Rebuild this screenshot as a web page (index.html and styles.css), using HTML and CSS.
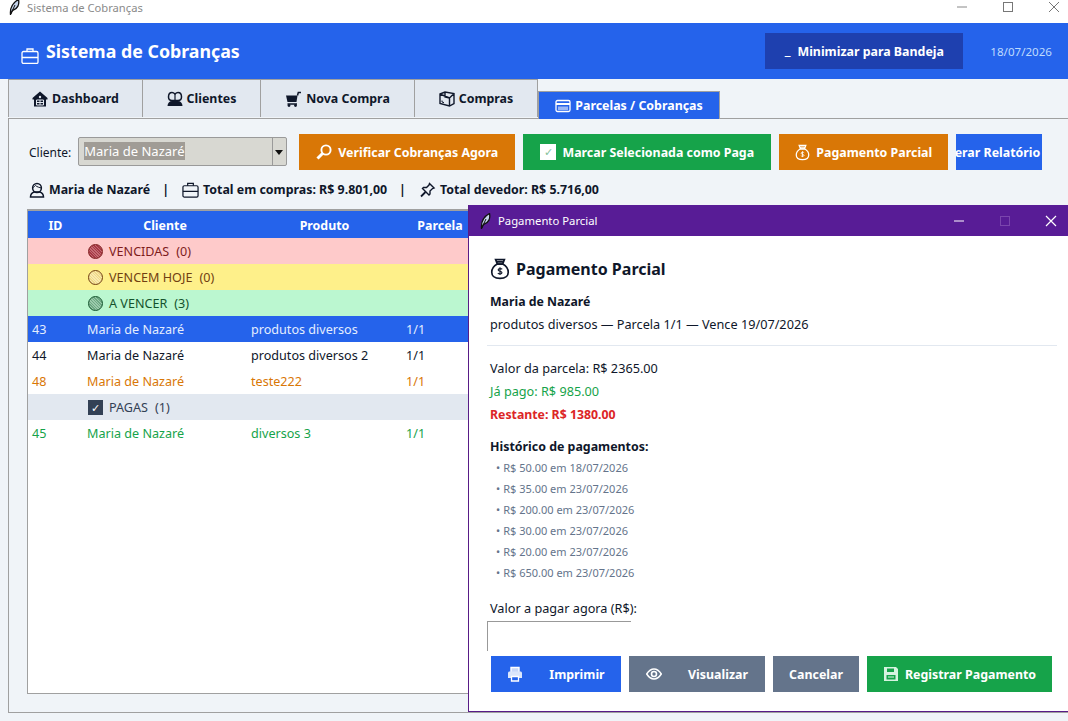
FILE: index.html
```html
<!DOCTYPE html>
<html lang="pt-BR">

<head>
    <meta charset="UTF-8">
    <title>Sistema de Cobranças</title>
    <link rel="stylesheet" href="styles.css">
</head>

<body>
    <svg class="defs" width="0" height="0">
        <symbol id="i-feather" viewBox="0 0 12 16">
            <path d="M2.500 15.500 C2 10 4 4 10.500 .5 C11.500 5 10 10 4.500 11.500 L2.500 15.500Z" fill="#c4d2ea" stroke="#111" stroke-width="1.300"/>
            <path d="M2.500 15.500 L7 6" stroke="#111" stroke-width="1"/>
        </symbol>
        <symbol id="i-case" viewBox="0 0 18 16">
            <rect x="1" y="3.500" width="16" height="12" rx="1.500" fill="none" stroke="currentColor" stroke-width="1.300"/>
            <path d="M1 9.500h16M6 3.500V1h6v2.500" fill="none" stroke="currentColor" stroke-width="1.300"/>
        </symbol>
        <symbol id="i-home" viewBox="0 0 16 16">
            <path d="M8 .5 L15.500 7 V8.500 H14 V15.500 H2 V8.500 H.5 V7Z" fill="currentColor"/>
            <path d="M4.500 9h7v5h-7zM8 9v5M4.500 11.500h7" fill="none" stroke="#e2e8f0" stroke-width="1"/>
            <circle cx="8" cy="6" r="1.200" fill="#e2e8f0"/>
        </symbol>
        <symbol id="i-users" viewBox="0 0 16 16">
            <path d="M1.500 6C1.500 3 3 1.500 5 1.500 6.500 1.500 7.500 2.500 8 3 8.500 2.500 9.500 1.500 11 1.500 13 1.500 14.500 3 14.500 6 14.500 8.500 13 9.500 11 9.500H5C3 9.500 1.500 8.500 1.500 6z" fill="none" stroke="currentColor" stroke-width="1.500"/>
            <path d="M8 3v6" stroke="currentColor" stroke-width="1.200"/>
            <path d="M.5 15c0-3 2-5 4.500-5h6c2.500 0 4.500 2 4.500 5z" fill="currentColor"/>
        </symbol>
        <symbol id="i-cart" viewBox="0 0 16 16">
            <path d="M.5 4.500h11.500l-1 6.500H2z" fill="currentColor"/>
            <path d="M12 4.500l.8-3h2.700M2 13h9.500" fill="none" stroke="currentColor" stroke-width="1.500"/>
            <circle cx="3.500" cy="14.500" r="1.400" fill="currentColor"/>
            <circle cx="10" cy="14.500" r="1.400" fill="currentColor"/>
        </symbol>
        <symbol id="i-box" viewBox="0 0 16 16">
            <path d="M1 3 L6 1 L15 2.500 V12.500 L10.500 15 L1 12.500Z M6 1 V6 L10.500 7 V15 M10.500 7 L15 2.500 M1 3 L10.500 7" fill="none" stroke="currentColor" stroke-width="1.400"/>
            <path d="M3 9.500v1.500l2 .6" fill="none" stroke="currentColor" stroke-width="1"/>
        </symbol>
        <symbol id="i-card" viewBox="0 0 16 14">
            <rect x="1" y="1.500" width="14" height="11" rx="1.500" fill="none" stroke="currentColor" stroke-width="1.300"/>
            <rect x="1" y="4" width="14" height="2" fill="currentColor"/>
            <rect x="3" y="7.500" width="10" height="3.500" fill="currentColor" opacity="0.550"/>
        </symbol>
        <symbol id="i-search" viewBox="0 0 16 16">
            <circle cx="10" cy="6" r="4.600" fill="none" stroke="currentColor" stroke-width="1.900"/>
            <path d="M6.500 9.500 L1.500 14.500" stroke="currentColor" stroke-width="3"/>
        </symbol>
        <symbol id="i-bag" viewBox="0 0 18 20">
            <path d="M5 1.500h8l-1.600 4H6.600zM6.500 3.500h5" fill="none" stroke="currentColor" stroke-width="1.500"/>
            <path d="M6.500 5.500C3 7.500 1.500 10 1.500 13c0 3.500 3 5.500 7.500 5.500s7.500-2 7.500-5.500c0-3-1.500-5.500-5-7.500z" fill="none" stroke="currentColor" stroke-width="1.500"/>
            <path d="M11 10.300C10.500 9.500 7.500 9.300 7.300 10.800c-.2 1.600 3.500 1 3.500 2.700 0 1.500-3 1.300-3.800.3M9 8.500v7" fill="none" stroke="currentColor" stroke-width="1"/>
        </symbol>
        <symbol id="i-user" viewBox="0 0 16 16">
            <circle cx="8" cy="6" r="4.400" fill="none" stroke="currentColor" stroke-width="1.500"/>
            <path d="M3.500 6C5 5 6 4 6.500 3.500 8 5 10.500 5.500 12.500 6" fill="none" stroke="currentColor" stroke-width="1"/>
            <path d="M1.500 15c0-3 2-4.500 4-5h5c2 .5 4 2 4 5z" fill="none" stroke="currentColor" stroke-width="1.500"/>
        </symbol>
        <symbol id="i-pin" viewBox="0 0 16 16">
            <path d="M10 1.500 L14.500 6 L13 6.500 L10.500 9 L10.500 12 L9.500 13 L3 6.500 L4 5.500 L7 5.500 L9.500 3Z" fill="none" stroke="currentColor" stroke-width="1.400"/>
            <path d="M6 10 L1.500 14.500" stroke="currentColor" stroke-width="1.800"/>
        </symbol>
        <symbol id="i-print" viewBox="0 0 16 16">
            <path d="M4 6V1.500h8V6" fill="#c9d8f8" stroke="currentColor" stroke-width="1.400"/>
            <path d="M2.500 5.500h11c.8 0 1.500.7 1.500 1.500v5h-3v-2H4v2H1V7c0-.8.7-1.500 1.500-1.500z" fill="#dbe6fb"/>
            <path d="M4.500 10.500h7v4.500h-7z" fill="none" stroke="currentColor" stroke-width="1.300"/>
        </symbol>
        <symbol id="i-eye" viewBox="0 0 16 12">
            <path d="M.7 6C3 2.500 5.500 1 8 1s5 1.500 7.300 5C13 9.500 10.500 11 8 11S3 9.500.7 6z" fill="none" stroke="currentColor" stroke-width="1.500"/>
            <circle cx="8" cy="6" r="2.500" fill="none" stroke="currentColor" stroke-width="1.600"/>
        </symbol>
        <symbol id="i-save" viewBox="0 0 16 16">
            <path d="M1 1h12l2 2v12H1z" fill="#d6f3e0"/>
            <rect x="4" y="2.500" width="7" height="3.500" fill="#16a34a"/>
            <rect x="3.500" y="9" width="9" height="4.500" fill="#16a34a"/>
            <path d="M5 11h6" stroke="#d6f3e0" stroke-width="1"/>
        </symbol>
    </svg>

    <div class="titlebar">
        <svg class="title-icon"><use href="#i-feather"/></svg>
        <span class="title-text">Sistema de Cobranças</span>
        <div class="win-buttons">
            <svg class="win-btn" viewBox="0 0 12 12"><path d="M1 6h10" stroke="#888"/></svg>
            <svg class="win-btn" viewBox="0 0 12 12"><rect x="1.500" y="1.500" width="9" height="9" fill="none" stroke="#777"/></svg>
            <svg class="win-btn" viewBox="0 0 12 12"><path d="M1 1l10 10M11 1L1 11" stroke="#777"/></svg>
        </div>
    </div>

    <header class="header">
        <h1 class="app-title"><svg class="app-icon"><use href="#i-case"/></svg>Sistema de Cobranças</h1>
        <button class="tray-btn"><span class="tray-mark">_</span>Minimizar para Bandeja</button>
        <span class="today">18/07/2026</span>
    </header>

    <div class="tabs">
        <div class="tab tab-1"><svg class="ico"><use href="#i-home"/></svg>Dashboard</div>
        <div class="tab tab-2"><svg class="ico"><use href="#i-users"/></svg>Clientes</div>
        <div class="tab tab-3"><svg class="ico ico-wide"><use href="#i-cart"/></svg>Nova Compra</div>
        <div class="tab tab-4"><svg class="ico"><use href="#i-box"/></svg>Compras</div>
        <div class="tab tab-active"><svg class="ico"><use href="#i-card"/></svg>Parcelas / Cobranças</div>
    </div>

    <main class="panel">
        <div class="toolbar">
            <label class="combo-label">Cliente:</label>
            <div class="combo">
                <span class="combo-value"><span class="combo-selected">Maria de Nazaré</span></span>
                <span class="combo-arrow"></span>
            </div>
            <button class="btn btn-orange btn-verify"><svg class="ico"><use href="#i-search"/></svg>Verificar Cobranças Agora</button>
            <button class="btn btn-green btn-mark"><span class="check-box">✓</span>Marcar Selecionada como Paga</button>
            <button class="btn btn-orange btn-partial"><svg class="ico ico-bag"><use href="#i-bag"/></svg>Pagamento Parcial</button>
            <button class="btn btn-blue btn-report"><span>Gerar Relatório</span></button>
        </div>

        <div class="summary">
            <svg class="ico"><use href="#i-user"/></svg>
            <span>Maria de Nazaré</span>
            <span class="sep">|</span>
            <svg class="ico ico-wide"><use href="#i-case"/></svg>
            <span>Total em compras: R$ 9.801,00</span>
            <span class="sep">|</span>
            <svg class="ico ico-wide"><use href="#i-pin"/></svg>
            <span>Total devedor: R$ 5.716,00</span>
        </div>

        <div class="table">
            <div class="row row-head">
                <div class="col-id">ID</div>
                <div class="col-client">Cliente</div>
                <div class="col-product">Produto</div>
                <div class="col-part">Parcela</div>
            </div>
            <div class="row group group-late"><span class="dot dot-red"></span>VENCIDAS<span class="count">(0)</span></div>
            <div class="row group group-today"><span class="dot dot-yellow"></span>VENCEM HOJE<span class="count">(0)</span></div>
            <div class="row group group-next"><span class="dot dot-green"></span>A VENCER<span class="count">(3)</span></div>
            <div class="row row-selected">
                <div class="col-id">43</div>
                <div class="col-client">Maria de Nazaré</div>
                <div class="col-product">produtos diversos</div>
                <div class="col-part">1/1</div>
            </div>
            <div class="row">
                <div class="col-id">44</div>
                <div class="col-client">Maria de Nazaré</div>
                <div class="col-product">produtos diversos 2</div>
                <div class="col-part">1/1</div>
            </div>
            <div class="row row-partial">
                <div class="col-id">48</div>
                <div class="col-client">Maria de Nazaré</div>
                <div class="col-product">teste222</div>
                <div class="col-part">1/1</div>
            </div>
            <div class="row group group-paid"><span class="paid-box">✓</span>PAGAS<span class="count">(1)</span></div>
            <div class="row row-paid">
                <div class="col-id">45</div>
                <div class="col-client">Maria de Nazaré</div>
                <div class="col-product">diversos 3</div>
                <div class="col-part">1/1</div>
            </div>
        </div>
    </main>

    <section class="dialog">
        <div class="dialog-bar">
            <svg class="title-icon"><use href="#i-feather"/></svg>
            <span class="dialog-title">Pagamento Parcial</span>
            <div class="dialog-buttons">
                <svg class="win-btn" viewBox="0 0 12 12"><path d="M1 6h10" stroke="#fff"/></svg>
                <svg class="win-btn" viewBox="0 0 12 12"><rect x="1.500" y="1.500" width="9" height="9" fill="none" stroke="#7a45ad"/></svg>
                <svg class="win-btn" viewBox="0 0 12 12"><path d="M1 1l10 10M11 1L1 11" stroke="#fff" stroke-width="1.200"/></svg>
            </div>
        </div>
        <div class="dialog-body">
            <h2 class="dialog-heading"><svg class="heading-icon"><use href="#i-bag"/></svg>Pagamento Parcial</h2>
            <p class="line line-name">Maria de Nazaré</p>
            <p class="line">produtos diversos — Parcela 1/1 — Vence 19/07/2026</p>
            <hr class="rule">
            <p class="line">Valor da parcela: R$ 2365.00</p>
            <p class="line line-paid">Já pago: R$ 985.00</p>
            <p class="line line-left">Restante: R$ 1380.00</p>
            <p class="line line-name history-title">Histórico de pagamentos:</p>
            <ul class="history">
                <li>R$ 50.00 em 18/07/2026</li>
                <li>R$ 35.00 em 23/07/2026</li>
                <li>R$ 200.00 em 23/07/2026</li>
                <li>R$ 30.00 em 23/07/2026</li>
                <li>R$ 20.00 em 23/07/2026</li>
                <li>R$ 650.00 em 23/07/2026</li>
            </ul>
            <p class="line amount-label">Valor a pagar agora (R$):</p>
            <div class="amount-input"></div>
        </div>
        <div class="dialog-footer">
            <button class="btn btn-blue foot-print"><svg class="ico"><use href="#i-print"/></svg>Imprimir</button>
            <button class="btn btn-slate foot-view"><svg class="ico"><use href="#i-eye"/></svg>Visualizar</button>
            <button class="btn btn-slate foot-cancel">Cancelar</button>
            <button class="btn btn-green foot-save"><svg class="ico"><use href="#i-save"/></svg>Registrar Pagamento</button>
        </div>
    </section>
</body>

</html>
```

FILE: styles.css
```css
* {
    box-sizing: border-box;
}

html,
body {
    height: 721px;
    overflow: hidden;
}

body {
    margin: 0;
    background: #f0f4f8;
    color: #0f172a;
    font-family: "Noto Sans", "Open Sans", sans-serif;
    font-size: 12px;
    position: relative;
}

.defs {
    position: absolute;
}

button {
    font-family: inherit;
    border: none;
    padding: 0;
}

/* window title bar */
.titlebar {
    height: 23px;
    background: #fff;
    display: flex;
    align-items: flex-start;
    padding-left: 8px;
    overflow: hidden;
}

.titlebar .title-icon {
    margin-top: -1px;
}

.title-icon {
    width: 12px;
    height: 16px;
    flex: none;
}

.title-text {
    color: #8a8a8a;
    font-size: 11.200px;
    line-height: 15px;
    margin-left: 7px;
}

.win-buttons {
    margin-left: auto;
    display: flex;
    gap: 34px;
    padding: 1px 8px 0 0;
}

.win-btn {
    width: 12px;
    height: 12px;
}

/* blue header */
.header {
    height: 56px;
    background: #2563eb;
    color: #fff;
    display: flex;
    align-items: center;
    padding: 0 16px 0 21px;
}

.app-title {
    margin: 0;
    font-size: 17.800px;
    font-weight: 700;
    display: flex;
    align-items: center;
}

.app-icon {
    width: 18px;
    height: 16px;
    margin: 9px 7px 0 0;
}

.tray-btn {
    margin-left: auto;
    width: 198px;
    height: 36px;
    background: #1e40af;
    color: #fff;
    font-size: 12.400px;
    font-weight: 700;
    display: flex;
    align-items: center;
    justify-content: center;
}

.tray-mark {
    font-size: 14px;
    line-height: 14px;
    margin: -2px 7px 0 0;
}

.today {
    margin-left: 27px;
    color: #bfdbfe;
    font-size: 11.600px;
}

/* tabs */
.tabs {
    height: 39px;
    display: flex;
    align-items: flex-end;
    padding-left: 8px;
}

.tab {
    height: 38px;
    margin-bottom: 1px;
    background: #e2e8f0;
    border: 1px solid #a0a0a0;
    border-bottom: none;
    font-size: 12.400px;
    font-weight: 700;
    display: flex;
    align-items: center;
    justify-content: center;
    gap: 4px;
}

.tab-1 {
    width: 135px;
}

.tab-2 {
    width: 119px;
    margin-left: -1px;
}

.tab-3 {
    width: 155px;
    margin-left: -1px;
}

.tab-4 {
    width: 124px;
    margin-left: -1px;
}

.tab-active {
    width: 182px;
    height: 28px;
    margin-bottom: -1px;
    background: #2563eb;
    color: #fff;
    position: relative;
}

.ico {
    width: 16px;
    height: 16px;
    flex: none;
}

.ico-wide {
    width: 17px;
}

/* main panel */
.panel {
    margin-left: 8px;
    height: 595px;
    width: 1100px;
    border: 1px solid #a0a0a0;
    padding: 15px 0 0 18px;
}

.toolbar {
    height: 36px;
    display: flex;
    align-items: center;
}

.combo-label {
    margin: 0 7px 0 2px;
}

.combo {
    width: 209px;
    height: 29px;
    margin: -2px 12px 0 0;
    background: #d8d8d2;
    border: 1px solid #9a9a9a;
    border-radius: 2px;
    display: flex;
}

.combo-value {
    flex: 1;
    display: flex;
    align-items: center;
    padding-left: 5px;
}

.combo-selected {
    background: #a09c96;
    color: #fff;
    font-size: 13px;
    line-height: 18px;
}

.combo-arrow {
    width: 14px;
    border-left: 1px solid #9a9a9a;
    position: relative;
}

.combo-arrow::after {
    content: "";
    position: absolute;
    left: 2px;
    top: 12px;
    border-left: 4.500px solid transparent;
    border-right: 4.500px solid transparent;
    border-top: 5px solid #111;
}

.btn {
    height: 36px;
    color: #fff;
    font-size: 12.400px;
    font-weight: 700;
    display: flex;
    align-items: center;
    justify-content: center;
    gap: 6px;
    flex: none;
    white-space: nowrap;
}

.btn-orange {
    background: #d97706;
}

.btn-green {
    background: #16a34a;
}

.btn-blue {
    background: #2563eb;
}

.btn-slate {
    background: #64748b;
}

.btn-verify {
    width: 216px;
    margin-right: 8px;
}

.btn-mark {
    width: 248px;
    margin-right: 8px;
}

.btn-partial {
    width: 169px;
    margin-right: 8px;
}

.ico-bag {
    width: 15px;
    height: 17px;
}

.btn-report {
    width: 86px;
    overflow: hidden;
    justify-content: flex-end;
    padding-right: 2px;
}

.check-box {
    width: 16px;
    height: 16px;
    background: #fff;
    color: #86c29c;
    font-size: 11px;
    font-weight: 400;
    line-height: 16px;
    text-align: center;
}

.summary {
    height: 39px;
    display: flex;
    align-items: center;
    padding-left: 2px;
    font-size: 12.400px;
    font-weight: 700;
    gap: 4px;
    white-space: nowrap;
}

.sep {
    margin: 0 9px 0 8px;
}

/* table */
.table {
    width: 1020px;
    height: 485px;
    border: 1px solid #a0a0a0;
    border-top: 2px solid #a0a0a0;
    background: #fff;
}

.row {
    height: 26px;
    display: flex;
    align-items: center;
    white-space: nowrap;
    font-size: 12.600px;
}

.row > div {
    padding-left: 4px;
}

.row-head {
    height: 27px;
    padding-top: 1px;
    background: #2563eb;
    color: #fff;
    font-size: 12.400px;
    font-weight: 700;
    text-align: center;
}

.row-head > div {
    padding-left: 0;
}

.col-id {
    width: 55px;
}

.col-client {
    width: 164px;
}

.col-product {
    width: 155px;
}

.col-part {
    width: 76px;
}

.group {
    padding-left: 60px;
}

.count {
    margin-left: 7px;
}

.group-late {
    background: #fecaca;
    color: #7f1d1d;
}

.group-today {
    background: #fef08a;
    color: #713f12;
}

.group-next {
    background: #bbf7d0;
    color: #14532d;
}

.group-paid {
    background: #e2e8f0;
    color: #334155;
}

.row-selected {
    background: #2563eb;
    color: #e4edfe;
}

.row-partial {
    color: #d97706;
}

.row-paid {
    color: #16a34a;
}

.dot {
    width: 15px;
    height: 15px;
    border-radius: 50%;
    margin-right: 6px;
    border: 1px solid;
}

.dot-red {
    background: repeating-linear-gradient(45deg, #a63a46 0 1px, #c46a72 1px 2px);
    border-color: #7f1d1d;
}

.dot-yellow {
    background: repeating-linear-gradient(45deg, #f0d98a 0 1px, #f8eab0 1px 2px);
    border-color: #713f12;
}

.dot-green {
    background: repeating-linear-gradient(45deg, #6fa985 0 1px, #9ccbac 1px 2px);
    border-color: #14532d;
}

.paid-box {
    width: 15px;
    height: 15px;
    background: #334155;
    color: #fff;
    font-size: 11px;
    line-height: 15px;
    text-align: center;
    margin-right: 6px;
}

/* payment dialog, a window over the main one */
.dialog {
    position: absolute;
    left: 468px;
    top: 205px;
    width: 602px;
    height: 507px;
    background: #fff;
    border: 1px solid #581c87;
    border-top: none;
}

.dialog-bar {
    height: 31px;
    background: #581c96;
    color: #fff;
    display: flex;
    align-items: center;
    padding-left: 10px;
}

.dialog-title {
    font-size: 11.300px;
    line-height: 29px;
    margin: -1px 0 0 7px;
}

.dialog-buttons {
    margin-left: auto;
    display: flex;
    gap: 34px;
    padding-right: 12px;
}

.dialog-body {
    height: 420px;
    padding: 19px 0 0 21px;
    color: #0f172a;
}

.dialog-heading {
    margin: 0 0 7px;
    font-size: 16px;
    font-weight: 700;
    line-height: 28px;
    display: flex;
    align-items: center;
    gap: 6px;
}

.heading-icon {
    width: 20px;
    height: 22px;
}

.line {
    margin: 0;
    font-size: 12.700px;
    line-height: 23px;
}

.line-name {
    font-size: 12.300px;
    font-weight: 700;
}

.rule {
    margin: 9px 12px 11px -3px;
    border: none;
    border-top: 1px solid #e2e8f0;
}

.line-paid {
    color: #16a34a;
}

.line-left {
    color: #dc2626;
    font-size: 12.300px;
    font-weight: 700;
}

.history-title {
    margin-top: 10px;
    line-height: 21px;
    font-size: 12.400px;
}

.history {
    list-style: none;
    margin: 0 0 0 6px;
    padding: 0;
}

.history li {
    height: 21px;
    line-height: 21px;
    font-size: 11px;
    color: #64748b;
}

.history li::before {
    content: "•";
    margin-right: 3px;
}

.amount-label {
    margin-top: 14px;
}

.amount-input {
    margin: 1px 0 0 -3px;
    width: 144px;
    height: 30px;
    border-top: 1px solid #999;
    border-left: 1px solid #999;
}

.dialog-footer {
    height: 55px;
    background: #fff;
    display: flex;
    gap: 8px;
    padding-left: 22px;
    position: relative;
}

.foot-print {
    width: 130px;
    gap: 26px;
}

.foot-view {
    width: 136px;
    gap: 26px;
}

.foot-cancel {
    width: 86px;
}

.foot-save {
    width: 185px;
    gap: 6px;
}
```
